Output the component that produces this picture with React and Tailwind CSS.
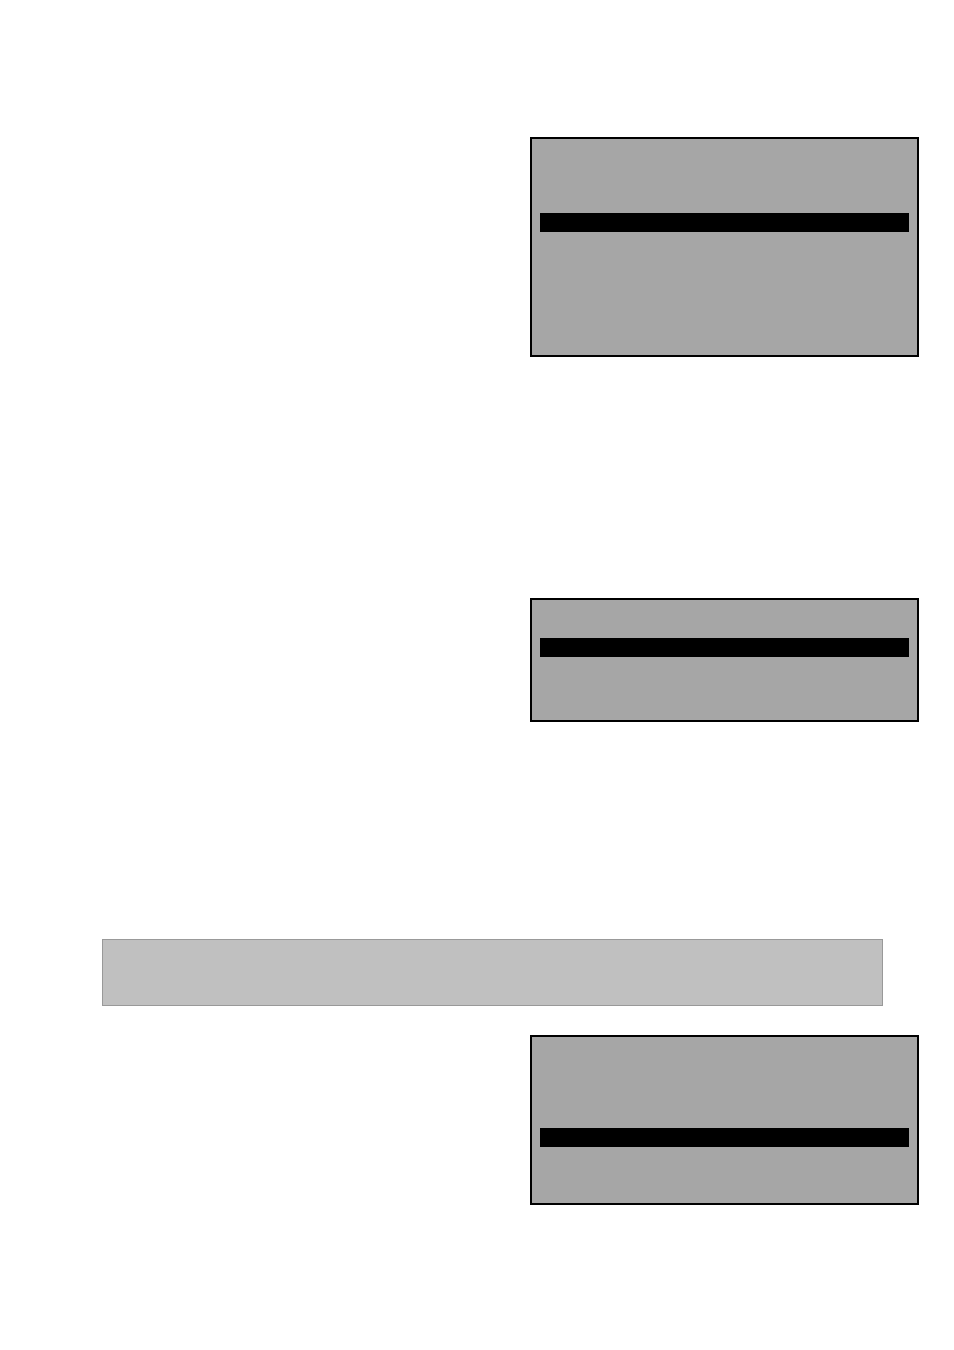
import React from "react";

// grey display panel with a single highlighted (black) row
const Panel = ({ height, barTop, className = "" }) => (
  <div
    className={`ml-[530px] w-[389px] border-2 border-black bg-[#a6a6a6] px-[8px] ${className}`}
    style={{ height, paddingTop: barTop - 2 }}
  >
    <div className="h-[19px] w-full bg-black" />
  </div>
);

export default function App() {
  return (
    <div className="relative h-[1350px] w-[954px] bg-white font-['Liberation_Sans',sans-serif]">
      <div className="pt-[137px]">
        <Panel height={220} barTop={76} />
        <Panel height={124} barTop={40} className="mt-[241px]" />

        {/* light note bar */}
        <div className="mt-[217px] ml-[102px] h-[67px] w-[781px] border border-[#999999] bg-[#c0c0c0]" />

        <Panel height={170} barTop={93} className="mt-[29px]" />
      </div>
    </div>
  );
}
